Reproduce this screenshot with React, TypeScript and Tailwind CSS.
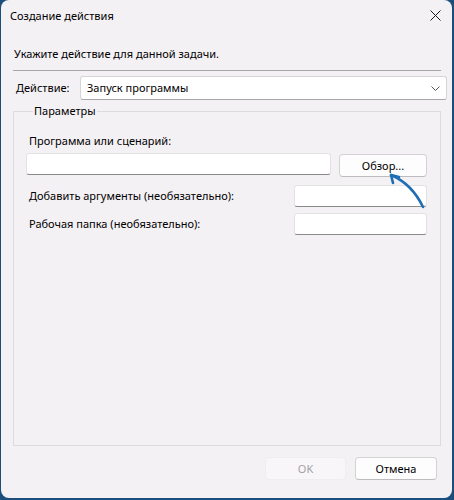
import React from "react";

const FONT = "font-['Segoe_UI','Noto_Sans',sans-serif]";

function TextBox({ className = "" }: { className?: string }) {
  return (
    <div
      className={`h-[22px] bg-white border border-[#e3e3e3] border-b-[#8a8a8a] rounded-[3px] ${className}`}
    />
  );
}

function Button({ label, disabled = false, className = "" }: { label: string; disabled?: boolean; className?: string }) {
  return (
    <button
      disabled={disabled}
      className={`h-[23px] rounded-[4px] border text-[11px] leading-4 flex items-center justify-center ${
        disabled
          ? "bg-[#f8f6f9] border-[#efedf0] text-[#a3a1a4]"
          : "bg-[#fdfdfd] border-[#d4d2d5] border-b-[#bdbbbe] text-black"
      } ${className}`}
    >
      {label}
    </button>
  );
}

export default function App() {
  return (
    <div className={`relative w-[454px] h-[500px] bg-[#1c4e7b] pl-px pr-[2px] pb-[2px] ${FONT}`}>
      <div className="h-full flex flex-col bg-[#f4f1f5] rounded-lg text-[11px] leading-4 text-black">
        {/* Title bar */}
        <div className="h-[31px] flex items-center justify-between pl-[9px] pr-[10px]">
          <span>Создание действия</span>
          <svg width="11" height="11" viewBox="0 0 11 11" className="mr-px">
            <path d="M0.5 0.5 L10.5 10.5 M10.5 0.5 L0.5 10.5" stroke="#1a1a1a" strokeWidth="1" />
          </svg>
        </div>

        <div className="flex flex-col pl-[12px]">
          <p className="mt-[15px] ml-px">Укажите действие для данной задачи.</p>
          <div className="mt-[8px] w-[428px] h-px bg-[#a7a5a8]" />

          {/* Action select */}
          <div className="mt-[5px] flex items-center">
            <span className="w-[67px] pl-[3px]">Действие:</span>
            <div className="w-[367px] h-[24px] bg-white border border-[#d6d4d7] border-b-[#a9a7aa] rounded-[3px] flex items-center justify-between pl-[6px] pr-[6px]">
              <span>Запуск программы</span>
              <svg width="9" height="5" viewBox="0 0 9 5">
                <path d="M0.5 0.5 L4.5 4.5 L8.5 0.5" stroke="#5a585b" strokeWidth="1" fill="none" />
              </svg>
            </div>
          </div>

          {/* Parameters group */}
          <fieldset className="mt-[3px] w-[428px] h-[343px] border border-[#dddbde] pl-[12px]">
            <legend className="ml-[7px] px-px">Параметры</legend>
            <p className="mt-[14px] ml-[3px]">Программа или сценарий:</p>
            <div className="mt-[4px] flex items-start gap-[8px]">
              <TextBox className="w-[305px]" />
              <Button label="Обзор..." className="mt-px w-[88px]" />
            </div>
            <div className="mt-[8px] flex items-center">
              <span className="flex-1 ml-[3px]">Добавить аргументы (необязательно):</span>
              <TextBox className="w-[133px] mr-[13px]" />
            </div>
            <div className="mt-[6px] flex items-center">
              <span className="flex-1 ml-[3px]">Рабочая папка (необязательно):</span>
              <TextBox className="w-[133px] mr-[13px]" />
            </div>
          </fieldset>
        </div>

        {/* Footer buttons */}
        <div className="mt-[11px] flex justify-end gap-[9px] pr-[15px]">
          <Button label="OK" disabled className="w-[81px]" />
          <Button label="Отмена" className="w-[82px]" />
        </div>
      </div>

      {/* Annotation arrow */}
      <svg className="absolute left-[380px] top-[165px]" width="50" height="50" viewBox="380 165 50 50">
        <path d="M423 207 Q412 184 391 175" stroke="#1f6db5" strokeWidth="2.6" fill="none" strokeLinecap="round" />
        <path d="M399 177 L391 175 L393 183" stroke="#1f6db5" strokeWidth="2.6" fill="none" strokeLinecap="round" strokeLinejoin="round" />
      </svg>
    </div>
  );
}
